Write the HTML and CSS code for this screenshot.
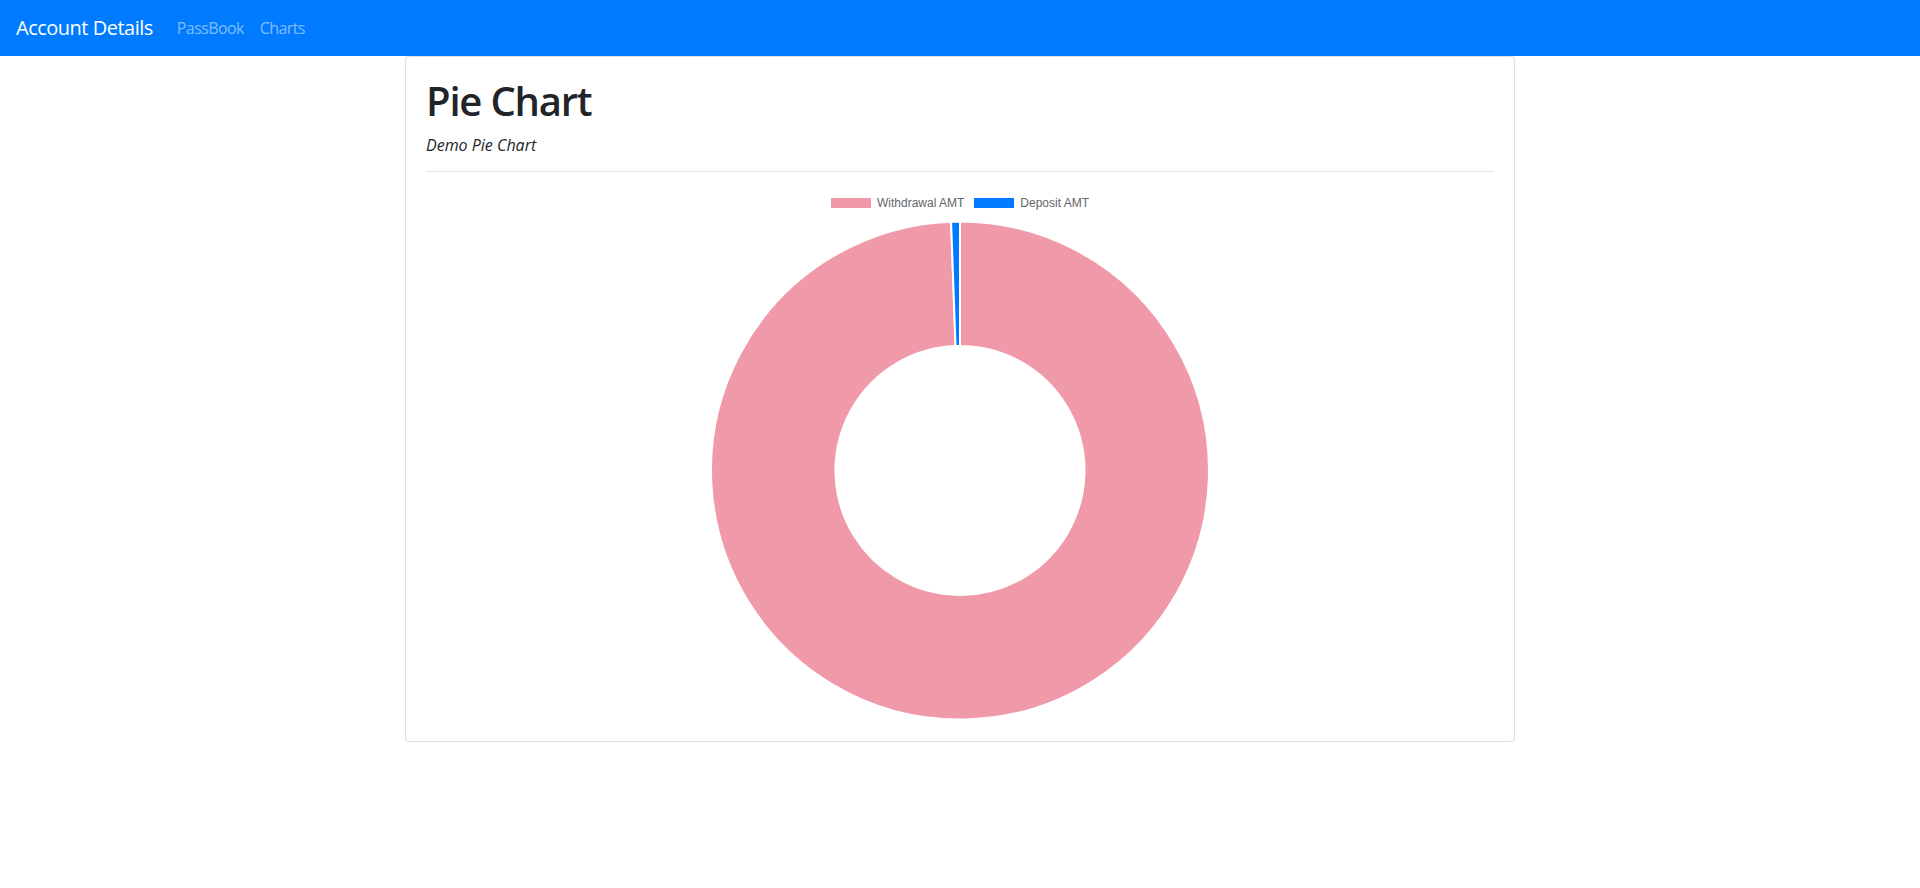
FILE: index.html
```html
<!DOCTYPE html>
<html lang="en">
<head>
<meta charset="utf-8">
<title>Pie Chart</title>
<link rel="stylesheet" href="styles.css">
</head>
<body>
<nav class="navbar">
  <a class="brand" href="#">Account Details</a>
  <ul class="nav">
    <li><a class="nav-link" href="#">PassBook</a></li>
    <li><a class="nav-link" href="#">Charts</a></li>
  </ul>
</nav>
<div class="container">
  <div class="card">
    <div class="card-body">
      <h1 class="title">Pie Chart</h1>
      <div class="subtitle"><i>Demo Pie Chart</i></div>
      <hr class="divider">
      <div class="chart">
        <div class="legend">
          <div class="legend-item"><span class="swatch swatch-pink"></span><span>Withdrawal AMT</span></div>
          <div class="legend-item"><span class="swatch swatch-blue"></span><span>Deposit AMT</span></div>
        </div>
        <svg class="donut" width="1068" height="501" viewBox="0 0 1068 501">
          <g transform="translate(534 250.5)">
            <path id="w" fill="#f09aa9" stroke="#fff" stroke-width="2" stroke-linejoin="round" d=""/>
            <path id="d" fill="#007bff" stroke="#fff" stroke-width="2" stroke-linejoin="round" d=""/>
          </g>
        </svg>
      </div>
    </div>
  </div>
</div>
<script src="chart.js"></script>
</body>
</html>
```

FILE: chart.js
```js
(function () {
  var data = [99.43, 0.57];
  var R = 249, r = 124.5;
  var total = data[0] + data[1];
  function pt(rad, a) { return [rad * Math.cos(a), rad * Math.sin(a)]; }
  function arc(a0, a1) {
    var large = (a1 - a0) > Math.PI ? 1 : 0;
    var p0 = pt(R, a0), p1 = pt(R, a1), p2 = pt(r, a1), p3 = pt(r, a0);
    return 'M' + p0[0].toFixed(3) + ' ' + p0[1].toFixed(3) +
      ' A' + R + ' ' + R + ' 0 ' + large + ' 1 ' + p1[0].toFixed(3) + ' ' + p1[1].toFixed(3) +
      ' L' + p2[0].toFixed(3) + ' ' + p2[1].toFixed(3) +
      ' A' + r + ' ' + r + ' 0 ' + large + ' 0 ' + p3[0].toFixed(3) + ' ' + p3[1].toFixed(3) + ' Z';
  }
  var start = -Math.PI / 2;
  var a1 = start + 2 * Math.PI * data[0] / total;
  document.getElementById('w').setAttribute('d', arc(start, a1));
  document.getElementById('d').setAttribute('d', arc(a1, start + 2 * Math.PI));
})();
```

FILE: styles.css
```css
* { box-sizing: border-box; }
body {
  margin: 0;
  font-family: "Open Sans", "Noto Sans", sans-serif;
  font-size: 16px;
  line-height: 1.5;
  color: #212529;
  background: #fff;
}
.navbar {
  display: flex;
  align-items: center;
  background: #007bff;
  padding: 8px 16px;
  height: 56px;
}
.brand {
  color: #fff;
  font-size: 20px;
  line-height: 30px;
  padding: 5px 0;
  margin-right: 16px;
  letter-spacing: -0.5px;
  text-decoration: none;
}
.nav {
  display: flex;
  list-style: none;
  margin: 0;
  padding: 0;
}
.nav-link {
  display: block;
  padding: 8px;
  color: rgba(255,255,255,.5);
  letter-spacing: -0.6px;
  text-decoration: none;
}
.container {
  width: 1140px;
  margin: 0 auto;
  padding: 0 15px;
}
.card {
  border: 1px solid rgba(0,0,0,.125);
  border-radius: 4px;
  background: #fff;
}
.card-body {
  padding: 20px;
}
.title {
  margin: 0 0 8px;
  font-size: 40px;
  font-weight: 600;
  line-height: 1.2;
  letter-spacing: -1.2px;
}
.subtitle {
  line-height: 24px;
}
.divider {
  margin: 14px 0 16px;
  border: 0;
  border-top: 1px solid rgba(0,0,0,.1);
}
.chart {
  display: flex;
  flex-direction: column;
  align-items: center;
}
.legend {
  display: flex;
  justify-content: center;
  gap: 10px;
  height: 32px;
  padding-top: 10px;
  font-family: "Liberation Sans", Arial, sans-serif;
  font-size: 12px;
  line-height: 10px;
  color: #666;
}
.legend-item {
  display: flex;
  align-items: center;
  gap: 6px;
  height: 10px;
}
.swatch {
  display: block;
  width: 40px;
  height: 10px;
}
.swatch-pink { background: #f09aa9; }
.swatch-blue { background: #007bff; }
.donut { display: block; }
```
